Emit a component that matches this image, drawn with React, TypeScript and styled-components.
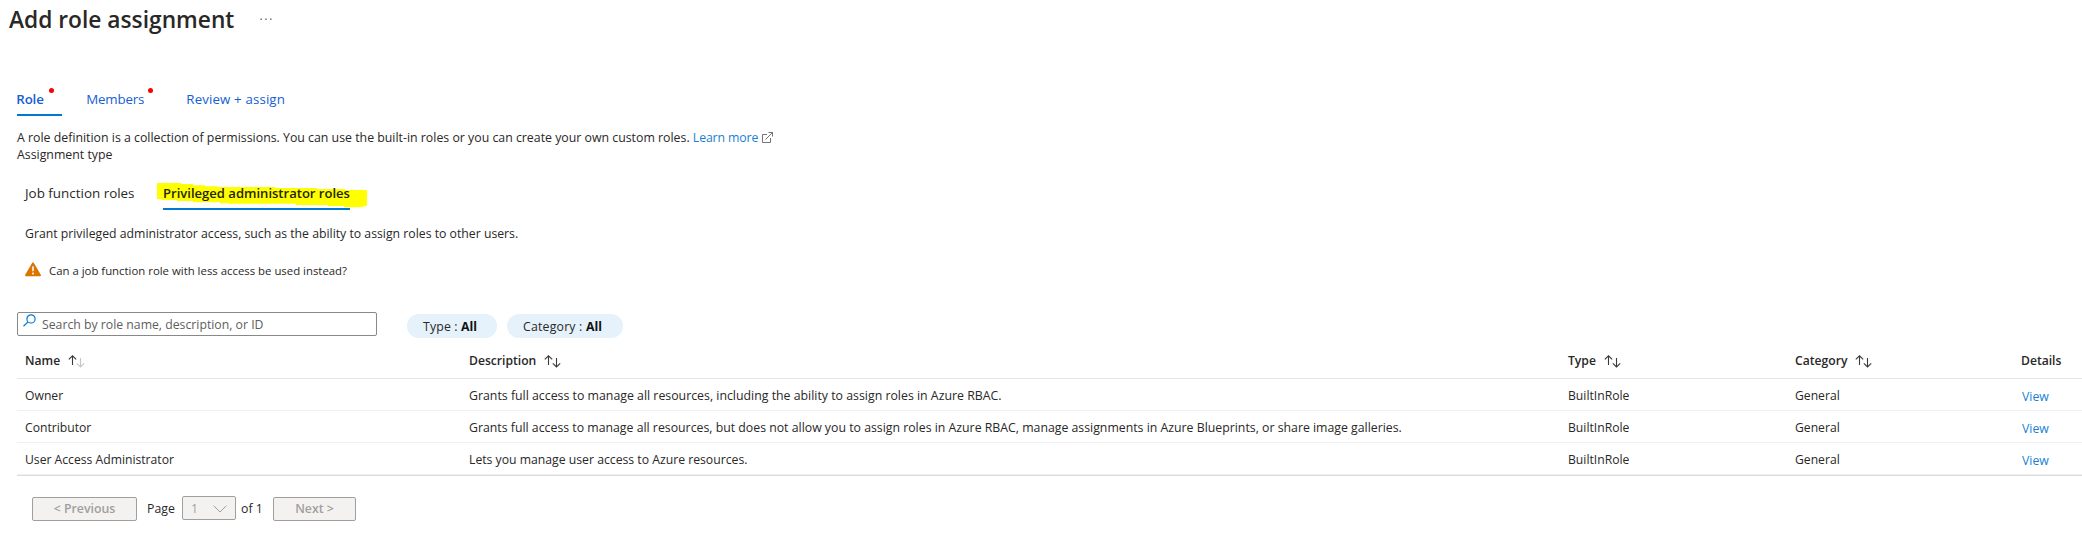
import React from 'react';
import styled, { createGlobalStyle, css } from 'styled-components';

const GlobalStyle = createGlobalStyle`
  body { margin: 0; background: #fff; }
  * { box-sizing: border-box; }
`;

const Page = styled.main`
  min-height: 556px;
  padding-top: 4px;
  overflow: hidden;
  color: #292827;
  font: 12.3px/17px "Open Sans", "Noto Sans", sans-serif;
  white-space: nowrap;
`;

const Header = styled.header`
  display: flex;
  align-items: flex-start;
  gap: 26px;
  padding-left: 9px;
`;

const Title = styled.h1`
  margin: 0;
  font-size: 22.75px;
  line-height: 31px;
  font-weight: 600;
`;

const MoreIcon = styled.svg`
  width: 12px;
  height: 4px;
  margin-top: 13px;
`;

const Content = styled.div`
  padding-left: 17px;
`;

const Tabs = styled.nav`
  display: flex;
  gap: 25px;
  margin-top: 55px;
`;

const Tab = styled.a<{ $active?: boolean; $width: number; $spacing?: number }>`
  display: flex;
  width: ${(p) => p.$width}px;
  padding-bottom: 6px;
  border-bottom: 2px solid ${(p) => (p.$active ? '#0078d4' : 'transparent')};
  color: #1560d4;
  font-size: 13.3px;
  line-height: 18px;
  font-weight: ${(p) => (p.$active ? 600 : 400)};
  letter-spacing: ${(p) => p.$spacing ?? 0}px;
`;

const TabLabel = styled.span`
  margin-left: -0.7px;
`;

const RequiredDot = styled.span<{ $inset: number }>`
  width: 5px;
  height: 5px;
  margin: -2px ${(p) => p.$inset}px 0 auto;
  border-radius: 50%;
  background: #f00;
`;

const Intro = styled.p`
  margin: 13px 0 0;
  font-size: 12.34px;
`;

const Link = styled.a<{ $spacing?: number }>`
  color: #1a7fd4;
  letter-spacing: ${(p) => p.$spacing ?? 0}px;
`;

const ExternalIcon = styled.svg`
  width: 11px;
  height: 11px;
  margin-left: 4px;
  vertical-align: -1px;
`;

const Panel = styled.section`
  padding-left: 8px;
`;

const SubTabs = styled.nav`
  display: flex;
  gap: 29px;
  margin-top: 21px;
`;

const SubTab = styled.a<{ $active?: boolean; $width: number }>`
  position: relative;
  width: ${(p) => p.$width}px;
  padding-bottom: 6px;
  font-size: 13.42px;
  line-height: 18px;
  border-bottom: 2px solid transparent;
  ${(p) =>
    p.$active &&
    css`
      border-color: #0078d4;
      color: #25250c;
      font-size: 13.05px;
      font-weight: 600;
    `}
`;

const Highlight = styled.svg`
  position: absolute;
  left: -6px;
  top: -1px;
  width: 210px;
  height: 25px;
  z-index: -1;
`;

const Hint = styled.p`
  margin: 15px 0 0;
  font-size: 12.25px;
`;

const Warning = styled.div`
  display: flex;
  gap: 8px;
  margin-top: 21px;
  font-size: 11.38px;
  line-height: 15px;
`;

const WarningIcon = styled.svg`
  width: 16px;
  height: 15px;
  margin-top: -1px;
`;

const Toolbar = styled.div`
  display: flex;
  align-items: flex-start;
  margin-top: 34px;
`;

const SearchBox = styled.div`
  display: flex;
  width: 360px;
  height: 24px;
  margin-right: 30px;
  padding: 3px 0 0 5px;
  border: 1px solid #8a8886;
  border-radius: 2px;
  color: #605e5c;
  font-size: 12.25px;
`;

const SearchIcon = styled.svg`
  width: 13px;
  height: 13px;
  margin: -2px 6px 0 0;
`;

const Pill = styled.div<{ $width: number; $spacing?: number }>`
  width: ${(p) => p.$width}px;
  height: 24px;
  margin: 2px 10px 0 0;
  padding: 4px 0 0 16px;
  border-radius: 12px;
  background: #e5f1fb;
  letter-spacing: ${(p) => p.$spacing ?? 0}px;
`;

const Strong = styled.b`
  color: #111;
  letter-spacing: 0;
`;

const Table = styled.div`
  border-bottom: 1px solid #dcdcdc;
`;

const Row = styled.div<{ $head?: boolean }>`
  display: grid;
  grid-template-columns: 444px 1099px 227px 226px 1fr;
  height: ${(p) => (p.$head ? 41 : 32)}px;
  padding: ${(p) => (p.$head ? 14 : 8)}px 0 0 8px;
  border-bottom: 1px solid ${(p) => (p.$head ? '#e6e6e6' : '#f0f0f0')};
`;

const HeadCell = styled.div`
  display: flex;
  gap: 8px;
  font-weight: 600;
  font-size: 12.15px;
`;

const Cell = styled.div<{ $size?: number }>`
  font-size: ${(p) => p.$size ?? 12.16}px;
`;

const ActionCell = styled.div`
  padding: 1px 0 0 1px;
`;

const SortIcon = styled.svg`
  width: 17px;
  height: 13px;
  margin-top: 3px;
`;

const Pagination = styled.footer`
  display: flex;
  align-items: flex-start;
  padding: 20px 0 0 15px;
`;

const PageButton = styled.button<{ $width: number }>`
  width: ${(p) => p.$width}px;
  height: 24px;
  margin: 1px 0 0;
  padding: 0 0 1px;
  border: 1px solid #a19f9d;
  border-radius: 2px;
  background: #f3f2f1;
  color: #a19f9d;
  font: 600 12.35px/17px "Open Sans", "Noto Sans", sans-serif;
`;

const PageLabel = styled.span<{ $width: number; $indent: number }>`
  width: ${(p) => p.$width}px;
  padding: 4px 0 0 ${(p) => p.$indent}px;
`;

const PageSelect = styled.div`
  display: flex;
  justify-content: space-between;
  width: 54px;
  height: 24px;
  padding: 3px 8px 0;
  border: 1px solid #a19f9d;
  border-radius: 2px;
  background: #f3f2f1;
  color: #a19f9d;
`;

const ChevronIcon = styled.svg`
  width: 14px;
  height: 8px;
  margin-top: 5px;
`;

function Sort({ ascending }: { ascending?: boolean }) {
  return (
    <SortIcon viewBox="0 0 17 13" fill="none" strokeWidth="1.1">
      <path d="M4.5 10V.9M.8 4.4 4.5.8l3.7 3.6" stroke="#3b3a39" />
      <path d="M12.5 3v8.8M8.8 8.3l3.7 3.6 3.7-3.6" stroke={ascending ? '#c8c6c4' : '#3b3a39'} />
    </SortIcon>
  );
}

const roles = [
  {
    name: 'Owner',
    size: 12.33,
    description:
      'Grants full access to manage all resources, including the ability to assign roles in Azure RBAC.',
  },
  {
    name: 'Contributor',
    size: 12.3,
    description:
      'Grants full access to manage all resources, but does not allow you to assign roles in Azure RBAC, manage assignments in Azure Blueprints, or share image galleries.',
  },
  {
    name: 'User Access Administrator',
    size: 12.23,
    description: 'Lets you manage user access to Azure resources.',
  },
];

export default function App() {
  return (
    <Page>
      <GlobalStyle />
      <Header>
        <Title>Add role assignment</Title>
        <MoreIcon viewBox="0 0 12 4" fill="#605e5c">
          <rect x="0.5" y="1.5" width="1.4" height="1.4" />
          <rect x="5.3" y="1.5" width="1.4" height="1.4" />
          <rect x="10.1" y="1.5" width="1.4" height="1.4" />
        </MoreIcon>
      </Header>
      <Content>
        <Tabs>
          <Tab $active $width={45} $spacing={-0.15}>
            <TabLabel>Role</TabLabel>
            <RequiredDot $inset={8} />
          </Tab>
          <Tab $width={75} $spacing={-0.2}>
            <TabLabel>Members</TabLabel>
            <RequiredDot $inset={9} />
          </Tab>
          <Tab $width={100} $spacing={0.13}>
            <TabLabel>Review + assign</TabLabel>
          </Tab>
        </Tabs>
        <Intro>
          A role definition is a collection of permissions. You can use the built-in roles or you can create your
          own custom roles. <Link $spacing={-0.15}>Learn more</Link>
          <ExternalIcon viewBox="0 0 11 11" fill="none" stroke="#767472">
            <path d="M5 2.5H.5v8h8V6M3.5 7.5l7-7M6.5.5h4v4" />
          </ExternalIcon>
          <br />
          Assignment type
        </Intro>
        <Panel>
          <SubTabs>
            <SubTab $width={109}>Job function roles</SubTab>
            <SubTab $active $width={187}>
              <Highlight viewBox="471 189 630 75" fill="#ff0">
                <path d="M471 189H543V192H579V196H615V199H651V201H825V204H951V207H1035V210H1101V258H1089V262H1032V258H984V255H888V251H687V250H660V247H579V243H531V240H483V237H471Z" />
              </Highlight>
              Privileged administrator roles
            </SubTab>
          </SubTabs>
          <Hint>Grant privileged administrator access, such as the ability to assign roles to other users.</Hint>
          <Warning>
            <WarningIcon viewBox="0 0 16 15">
              <path d="M8 1.2 15 13.3H1Z" fill="#db7500" stroke="#db7500" strokeWidth="1.8" strokeLinejoin="round" />
              <path d="M7.1 4.5h1.8L8.7 9.3H7.3Z" fill="#fff" />
              <circle cx="8" cy="11.4" r="1" fill="#fff" />
            </WarningIcon>
            Can a job function role with less access be used instead?
          </Warning>
        </Panel>
        <Toolbar>
          <SearchBox>
            <SearchIcon viewBox="0 0 13 13" fill="none" stroke="#0078d4" strokeWidth="1.2">
              <circle cx="8" cy="4.9" r="4.1" />
              <path d="M5 7.9.5 12.3" />
            </SearchIcon>
            Search by role name, description, or ID
          </SearchBox>
          <Pill $width={90} $spacing={0.15}>
            Type : <Strong>All</Strong>
          </Pill>
          <Pill $width={116} $spacing={0.2}>
            Category : <Strong>All</Strong>
          </Pill>
        </Toolbar>
        <Table>
          <Row $head>
            <HeadCell>
              Name <Sort ascending />
            </HeadCell>
            <HeadCell>
              Description <Sort />
            </HeadCell>
            <HeadCell>
              Type <Sort />
            </HeadCell>
            <HeadCell>
              Category <Sort />
            </HeadCell>
            <HeadCell>Details</HeadCell>
          </Row>
          {roles.map((role) => (
            <Row key={role.name}>
              <Cell>{role.name}</Cell>
              <Cell $size={role.size}>{role.description}</Cell>
              <Cell>BuiltInRole</Cell>
              <Cell>General</Cell>
              <ActionCell>
                <Link>View</Link>
              </ActionCell>
            </Row>
          ))}
        </Table>
        <Pagination>
          <PageButton $width={105}>&lt; Previous</PageButton>
          <PageLabel $width={45} $indent={10}>Page</PageLabel>
          <PageSelect>
            1
            <ChevronIcon viewBox="0 0 14 8" fill="none" stroke="#a19f9d">
              <path d="M.6.7 7 7 13.4.7" />
            </ChevronIcon>
          </PageSelect>
          <PageLabel $width={37} $indent={5}>of 1</PageLabel>
          <PageButton $width={83}>Next &gt;</PageButton>
        </Pagination>
      </Content>
    </Page>
  );
}
